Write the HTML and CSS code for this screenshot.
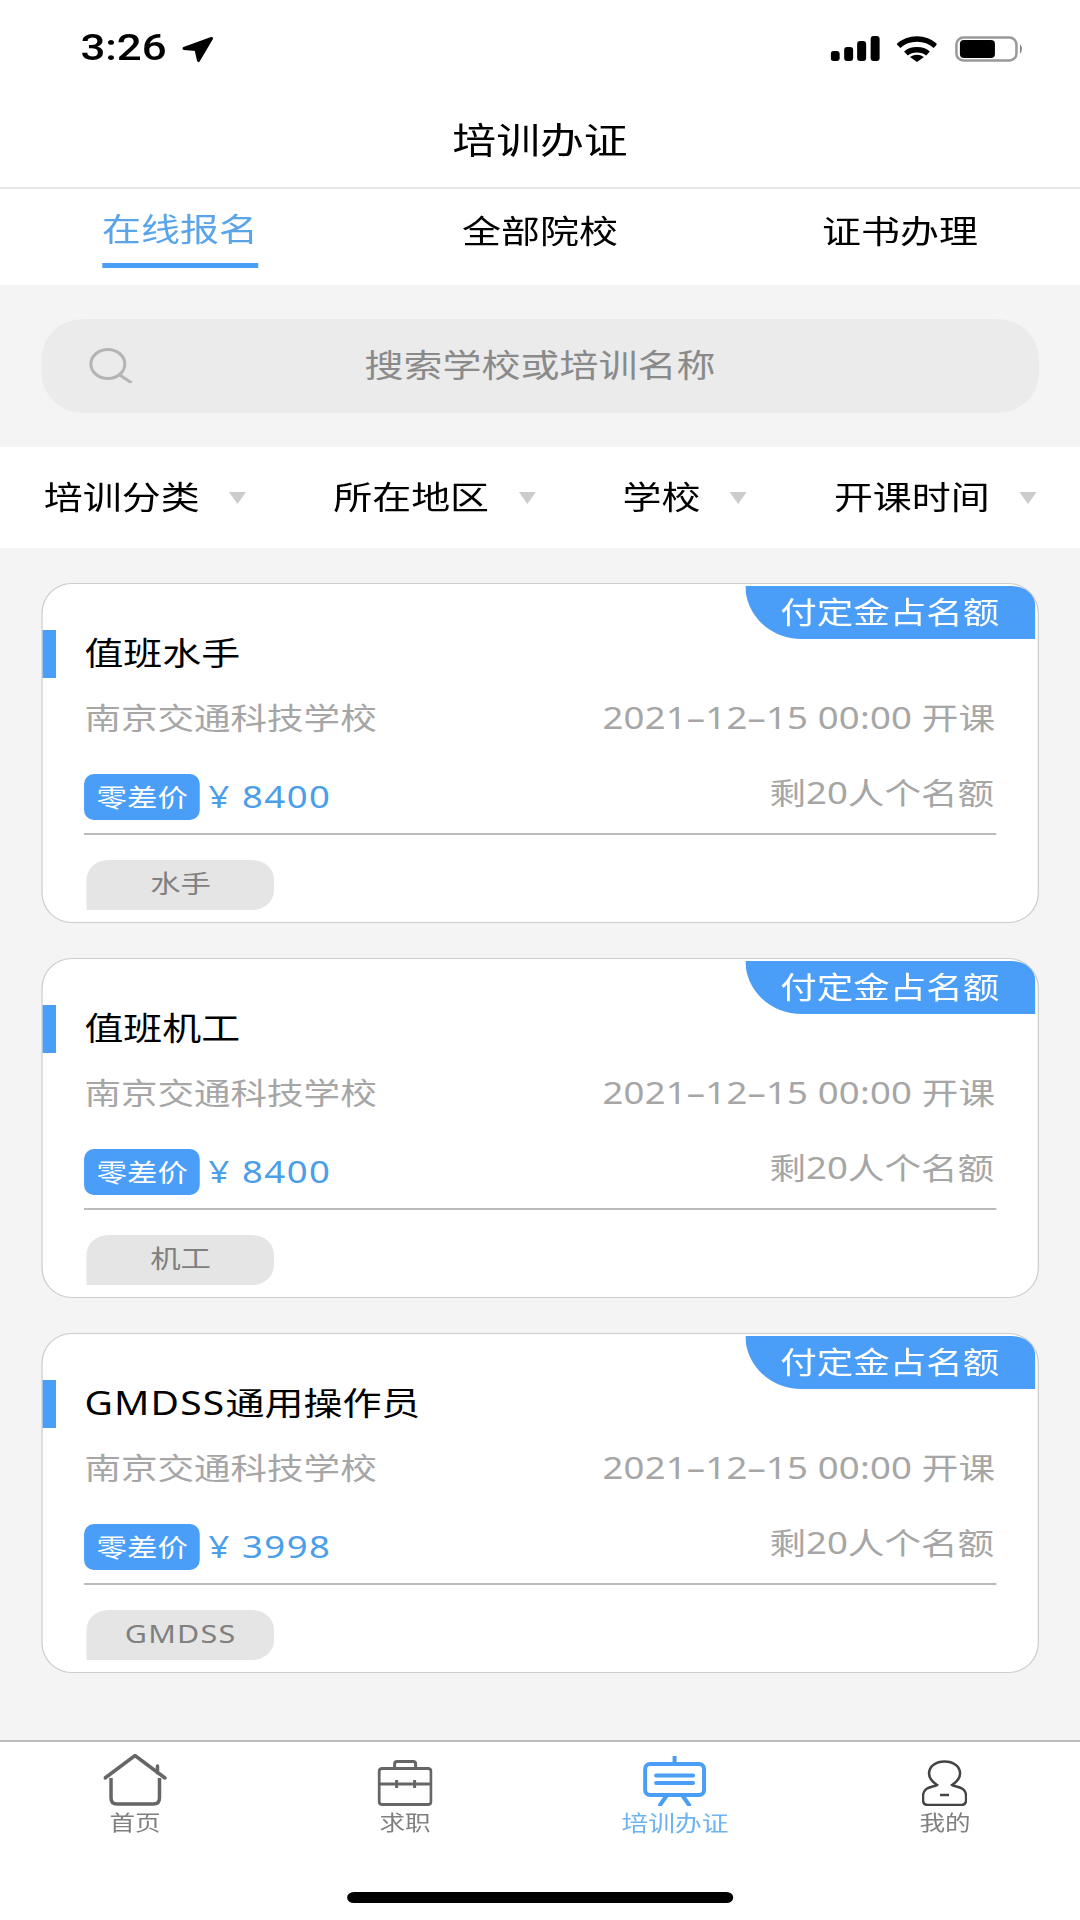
FILE: index.html
```html
<!DOCTYPE html>
<html lang="zh-CN">
<head>
    <meta charset="UTF-8">
    <meta name="viewport" content="width=device-width, initial-scale=1.0">
    <title>培训办证</title>
    <link rel="stylesheet" href="styles.css">
</head>
<body>
<div class="app">
    <div class="status">
        <div class="status-left">
            <span class="time">3:26</span>
            <svg class="ico-loc" viewBox="0 0 32 26" preserveAspectRatio="none"><path d="M2.5 12.5 30 2.5 17 24.5 14.5 13.5Z" fill="#000" stroke="#000" stroke-width="3" stroke-linejoin="round"/></svg>
        </div>
        <div class="status-right">
            <svg class="ico-signal" viewBox="0 0 49 25" preserveAspectRatio="none"><rect x="0" y="15" width="9" height="10" rx="3"/><rect x="13.5" y="11" width="9" height="14" rx="3"/><rect x="26.5" y="5" width="9" height="20" rx="3"/><rect x="40" y="0" width="9" height="25" rx="3"/></svg>
            <svg class="ico-wifi" viewBox="0 0 41 26" preserveAspectRatio="none"><path d="M2 10C12 0.5 29 0.5 39 10M9.5 17.5C15 12.5 26 12.5 31.5 17.5" fill="none" stroke="#000" stroke-width="5.5"/><path d="M13.5 21Q20.5 16.5 27.5 21L20.5 26Z"/></svg>
            <svg class="ico-batt" viewBox="0 0 69 26" preserveAspectRatio="none"><rect x="1.5" y="1.5" width="60" height="23" rx="7" fill="none" stroke="#999" stroke-width="2.5"/><rect x="5" y="4" width="35" height="18" rx="4"/><path d="M65 8Q69 13 65 18Z" fill="#888"/></svg>
        </div>
    </div>

    <div class="header">培训办证</div>

    <div class="tabs">
        <div class="tab active"><span>在线报名</span></div>
        <div class="tab"><span>全部院校</span></div>
        <div class="tab"><span>证书办理</span></div>
    </div>

    <div class="main">
        <div class="search-wrap">
            <div class="search">
                <svg class="ico-search" viewBox="0 0 44 35" preserveAspectRatio="none"><ellipse cx="19" cy="16" rx="17" ry="14.5" fill="none" stroke="#b4b4b4" stroke-width="3"/><path d="M31 27 43 35" stroke="#b4b4b4" stroke-width="3"/></svg>
                搜索学校或培训名称
            </div>
        </div>

        <div class="filters">
            <div class="filter">培训分类<i class="caret"></i></div>
            <div class="filter">所在地区<i class="caret"></i></div>
            <div class="filter">学校<i class="caret"></i></div>
            <div class="filter">开课时间<i class="caret"></i></div>
        </div>

        <div class="list">
            <div class="card">
                <i class="tick"></i>
                <div class="ribbon">付定金占名额</div>
                <div class="card-title">值班水手</div>
                <div class="row info">
                    <span>南京交通科技学校</span>
                    <span class="date">2021–12–15 00:00 开课</span>
                </div>
                <div class="row price-row">
                    <div class="price-left"><span class="badge">零差价</span><span class="price">¥ 8400</span></div>
                    <span class="left-count">剩20人个名额</span>
                </div>
                <div class="divider"></div>
                <div class="tag">水手</div>
            </div>

            <div class="card">
                <i class="tick"></i>
                <div class="ribbon">付定金占名额</div>
                <div class="card-title">值班机工</div>
                <div class="row info">
                    <span>南京交通科技学校</span>
                    <span class="date">2021–12–15 00:00 开课</span>
                </div>
                <div class="row price-row">
                    <div class="price-left"><span class="badge">零差价</span><span class="price">¥ 8400</span></div>
                    <span class="left-count">剩20人个名额</span>
                </div>
                <div class="divider"></div>
                <div class="tag">机工</div>
            </div>

            <div class="card">
                <i class="tick"></i>
                <div class="ribbon">付定金占名额</div>
                <div class="card-title"><span class="latin">GMDSS</span>通用操作员</div>
                <div class="row info">
                    <span>南京交通科技学校</span>
                    <span class="date">2021–12–15 00:00 开课</span>
                </div>
                <div class="row price-row">
                    <div class="price-left"><span class="badge">零差价</span><span class="price">¥ 3998</span></div>
                    <span class="left-count">剩20人个名额</span>
                </div>
                <div class="divider"></div>
                <div class="tag latin">GMDSS</div>
            </div>
        </div>
    </div>

    <div class="tabbar">
        <div class="nav">
            <div class="nav-item">
                <div class="nav-icon"><svg class="ico-home" viewBox="0 0 63 52" preserveAspectRatio="none"><path d="M1.5 24 31.5 1.5 61.5 24M54 12V19" fill="none" stroke="#666" stroke-width="3.5" stroke-linecap="round"/><path d="M7.5 24V44Q7.5 50 13.5 50H50Q56 50 56 44V24" fill="none" stroke="#666" stroke-width="3.5"/></svg></div>
                首页
            </div>
            <div class="nav-item">
                <div class="nav-icon"><svg class="ico-case" viewBox="0 0 55 46" preserveAspectRatio="none"><rect x="1.5" y="8.5" width="52" height="36" rx="3" fill="none" stroke="#666" stroke-width="3"/><path d="M17 8V4Q17 1.5 19.5 1.5H35.5Q38 1.5 38 4V8M1.5 24H53.5M19 20V28M37 20V28" fill="none" stroke="#666" stroke-width="3"/></svg></div>
                求职
            </div>
            <div class="nav-item current">
                <div class="nav-icon"><svg class="ico-board" viewBox="0 0 63 50" preserveAspectRatio="none"><path d="M31.5 1V8M13 19.5H50M13 27H50M24 39 17 49M39 39 46 49" fill="none" stroke="#4b9ef7" stroke-width="4" stroke-linecap="round"/><rect x="2" y="8" width="59" height="31" rx="5" fill="none" stroke="#4b9ef7" stroke-width="4"/></svg></div>
                培训办证
            </div>
            <div class="nav-item">
                <div class="nav-icon"><svg class="ico-me" viewBox="0 0 45 46" preserveAspectRatio="none"><path d="M15 25C9 21 7 17 7 13.5 7 6 14 1.5 22.5 1.5 31 1.5 38 6 38 13.5 38 17 36 21 30 25 32 27 44 26 44 36V40Q44 45 39 45H6Q1 45 1 40V36C1 26 13 27 15 25Z" fill="none" stroke="#444" stroke-width="2.5"/><path d="M18 35H27" stroke="#444" stroke-width="2.5"/></svg></div>
                我的
            </div>
        </div>
        <div class="home-bar"></div>
    </div>
</div>
</body>
</html>
```

FILE: styles.css
```css
/* the whole screen is stretched sideways, widths below are before the stretch */
body {
    margin: 0;
    overflow: hidden;
    background: #fff;
}

.app {
    width: 886.7px;
    height: 1920px;
    display: flex;
    flex-direction: column;
    transform: scaleX(1.218);
    transform-origin: 0 0;
    font-family: "Noto Sans", "Noto Sans CJK SC", sans-serif;
    color: #000;
}

svg {
    display: block;
    fill: #000;
}

.latin {
    letter-spacing: 1px;
}

.status {
    height: 90px;
    flex: none;
    display: flex;
    justify-content: space-between;
    box-sizing: border-box;
    padding: 35px 46px 0 66px;
}

.status-left,
.status-right {
    display: flex;
    height: 27px;
    align-items: center;
}

.time {
    font-family: Roboto, sans-serif;
    font-weight: 500;
    font-size: 36px;
    line-height: 29px;
}

.ico-loc {
    width: 26.3px;
    height: 26px;
    margin-left: 12px;
}

.ico-signal {
    width: 40.2px;
    height: 25px;
}

.ico-wifi {
    width: 33.7px;
    height: 26px;
    margin-left: 13px;
}

.ico-batt {
    width: 56.7px;
    height: 26px;
    margin-left: 14.8px;
}

.header {
    height: 99px;
    flex: none;
    box-sizing: border-box;
    display: flex;
    align-items: center;
    justify-content: center;
    font-size: 36px;
    border-bottom: 2px solid #e8e8e8;
}

.tabs {
    height: 96px;
    flex: none;
    display: flex;
}

.tab {
    flex: 1;
    text-align: center;
    font-size: 32px;
    line-height: 40px;
    padding-top: 22px;
}

.tab span {
    display: inline-block;
}

.tab.active {
    padding-top: 20px;
    color: #5aa5ea;
}

.tab.active span {
    padding-bottom: 14px;
    border-bottom: 5px solid #4b9ef7;
}

.main {
    flex: 1;
    background: #f4f4f4;
}

.search-wrap {
    padding: 34px 34.2px;
}

.search {
    position: relative;
    height: 94px;
    box-sizing: border-box;
    padding-bottom: 7px;
    border-radius: 34px / 40px;
    background: #ebebeb;
    color: #8a8a8a;
    font-size: 32px;
    display: flex;
    align-items: center;
    justify-content: center;
}

.ico-search {
    position: absolute;
    left: 39px;
    top: 29px;
    width: 36px;
    height: 35px;
}

.filters {
    height: 101px;
    box-sizing: border-box;
    padding: 0 36px 5px;
    background: #fff;
    display: flex;
    align-items: center;
    justify-content: space-between;
    font-size: 32px;
}

.filter {
    display: flex;
    align-items: center;
}

.caret {
    margin: 5px 0 0 24px;
    border-left: 7px solid transparent;
    border-right: 7px solid transparent;
    border-top: 12px solid #ccc;
}

.list {
    padding: 35px 34.2px 0;
}

.card {
    position: relative;
    height: 340px;
    box-sizing: border-box;
    margin-bottom: 35px;
    padding: 49px 33.4px 0 34.1px;
    background: #fff;
    border: 1px solid #ccc;
    border-radius: 25px / 30px;
}

.tick {
    position: absolute;
    left: 0;
    top: 46px;
    width: 11px;
    height: 48px;
    background: #4b9ef7;
}

.ribbon {
    position: absolute;
    top: 2px;
    right: 2px;
    width: 238px;
    height: 53px;
    box-sizing: border-box;
    padding-right: 29px;
    background: #4b9ef7;
    border-radius: 0 19px 0 46px / 0 20px 0 53px;
    color: #fff;
    font-size: 30px;
    line-height: 51px;
    text-align: right;
}

.card-title {
    font-size: 32px;
    line-height: 40px;
}

.row {
    display: flex;
    justify-content: space-between;
}

.info {
    margin-top: 25px;
    font-size: 30px;
    line-height: 40px;
    color: #a6a6a6;
}

.date {
    margin-right: 1px;
    letter-spacing: 0.15px;
}

.price-row {
    margin-top: 36px;
    height: 46px;
}

.price-left {
    display: flex;
    align-items: center;
}

.badge {
    width: 95px;
    height: 46px;
    border-radius: 8px / 10px;
    background: #4b9ef7;
    color: #fff;
    font-size: 25px;
    line-height: 46px;
    text-align: center;
}

.price {
    margin-left: 7px;
    padding-bottom: 2px;
    font-size: 30px;
    letter-spacing: 1.2px;
    color: #4a9eea;
}

.left-count {
    margin-right: 2px;
    font-size: 30px;
    line-height: 38px;
    color: #a6a6a6;
}

.divider {
    margin-top: 13px;
    height: 2px;
    background: #bbb;
}

.tag {
    margin: 25px 0 0 2px;
    width: 154px;
    height: 50px;
    border-radius: 18px 18px 18px 0 / 20px 20px 20px 0;
    background: #e5e5e5;
    color: #808080;
    font-size: 25px;
    line-height: 46px;
    text-align: center;
}

.tabbar {
    flex: none;
    height: 180px;
    box-sizing: border-box;
    border-top: 2px solid #bbb;
    background: #fff;
    padding-top: 10px;
}

.nav {
    height: 140px;
    display: flex;
}

.nav-item {
    flex: 1;
    display: flex;
    flex-direction: column;
    align-items: center;
    font-size: 21px;
    line-height: 26px;
    color: #808080;
}

.nav-item.current {
    font-size: 22px;
    color: #6db3f2;
}

.nav-icon {
    height: 57px;
    display: flex;
    align-items: flex-end;
    padding-bottom: 3px;
    box-sizing: border-box;
}

.ico-home {
    width: 51.7px;
    height: 52px;
}

.ico-case {
    width: 45.2px;
    height: 46px;
}

.ico-board {
    width: 51.7px;
    height: 50px;
}

.ico-me {
    width: 37px;
    height: 46px;
}

.home-bar {
    width: 317px;
    height: 11px;
    margin: 0 auto;
    border-radius: 6px;
    background: #000;
}
```
